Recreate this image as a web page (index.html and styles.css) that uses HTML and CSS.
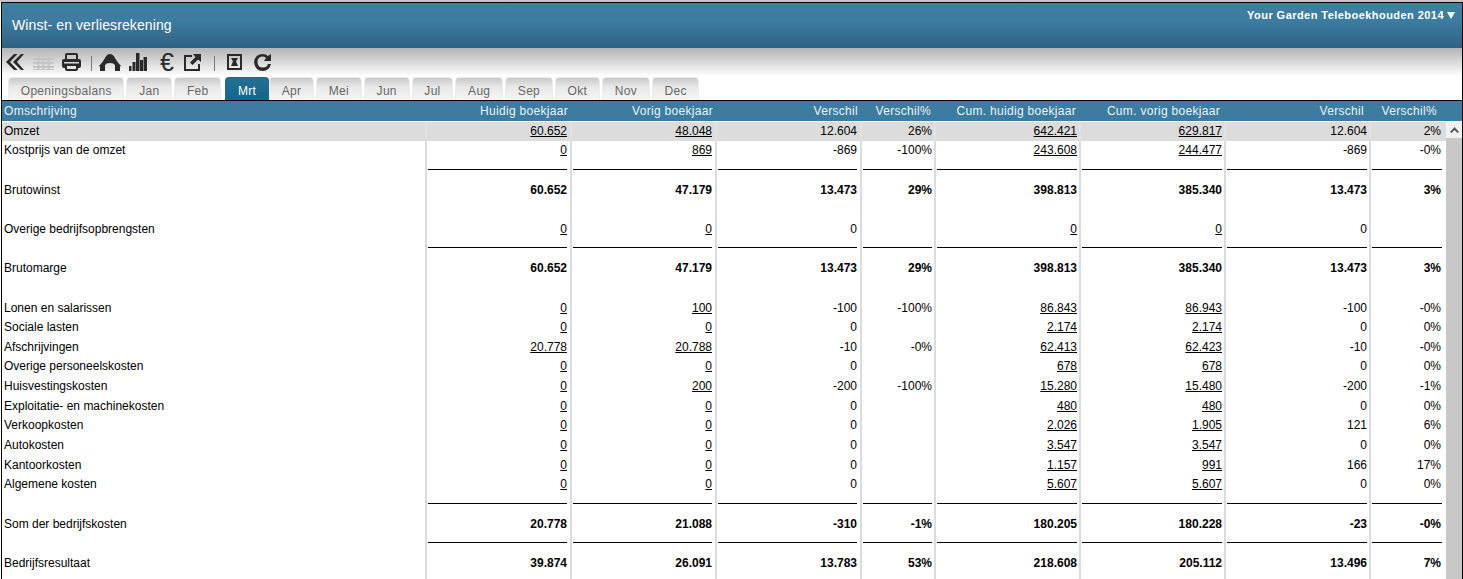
FILE: index.html
```html
<!DOCTYPE html>
<html lang="nl">
<head>
  <meta charset="UTF-8" />
  <title>Winst- en verliesrekening</title>
  <link rel="stylesheet" href="styles.css">
</head>
<body>
  <div class="frame">
    <header class="topbar">
      <h1>Winst- en verliesrekening</h1>
      <div class="company">Your Garden Teleboekhouden 2014 <span class="caret"></span></div>
    </header>

    <div class="toolbar">
      <svg class="ic ic-back" viewBox="0 0 19 18"><path d="M9 1 1 9l8 8h3.500L5 9l7.500-8zM16 1 8 9l8 8h3L12 9l7-8z" /></svg>
      <svg class="ic ic-grid" viewBox="0 0 21 18"><path d="M0 1h21v2H0zM0 5h21v2H0zM0 9h21v2H0zM0 13h21v2H0zM0 16h21v1H0zM4.500 1h2v16h-2zM9.500 1h2v16h-2zM14.500 1h2v16h-2z" /></svg>
      <svg class="ic ic-print" viewBox="0 0 19 18"><path fill-rule="evenodd" d="M5 0h9q2 0 2 2v4h1q2 0 2 2v5q0 2-2 2h-1v1q0 2-2 2H5q-2 0-2-2v-1H2q-2 0-2-2V8q0-2 2-2h1V2q0-2 2-2zm0 2v4h9V2zM2 9v1.500h15V9zM5 13v3h9v-3z" /></svg>
      <span class="tool-sep tool-sep-a"></span>
      <svg class="ic ic-home" viewBox="0 0 22 17"><path d="M0 12Q4 8 6 4 8 0 11 0t5 4q2 4 6 8l-1 .5V17h-5v-5q0-3-5-3t-5 3v5H1v-4.500z" /></svg>
      <svg class="ic ic-bars" viewBox="0 0 18 18"><path d="M0 13h2.500v5H0zM3.500 9h3v9h-3zM7 0h3.500v18H7zM11 7h3v11h-3zM14.500 4H18v14h-3.500z" /></svg>
      <span class="euro">€</span>
      <svg class="ic ic-ext" viewBox="0 0 17 17"><path d="M0 1h8v2H2v12h12V10h2v7H0z" /><path d="M9 0h8v8l-3-2.500L8.500 11 6 8.500 11.500 3z" /></svg>
      <span class="tool-sep tool-sep-b"></span>
      <svg class="ic ic-box" viewBox="0 0 15 16"><path fill-rule="evenodd" d="M0 0h15v16H0zm2 2v12h11V2z" /><path d="M4 4h7L9 7.500l2 4.500H4l2-4.500z" /></svg>
      <svg class="ic ic-refresh" viewBox="0 0 18 18"><path d="M9 1q3 0 5 2l3-2v7h-7l2-3Q11 3.500 9 3.500 3.500 3.500 3.500 9T9 14.500q4 0 5-3.500h3q-2 7-8 7-8 0-9-9 1-8 9-8z" /></svg>
    </div>

    <nav class="tabs">
      <a class="tab">Openingsbalans</a>
      <a class="tab">Jan</a>
      <a class="tab">Feb</a>
      <a class="tab active">Mrt</a>
      <a class="tab">Apr</a>
      <a class="tab">Mei</a>
      <a class="tab">Jun</a>
      <a class="tab">Jul</a>
      <a class="tab">Aug</a>
      <a class="tab">Sep</a>
      <a class="tab">Okt</a>
      <a class="tab">Nov</a>
      <a class="tab">Dec</a>
    </nav>

    <div class="table-head">
      <span class="th-name">Omschrijving</span>
      <span class="th">Huidig boekjaar</span>
      <span class="th">Vorig boekjaar</span>
      <span class="th">Verschil</span>
      <span class="th th-pct">Verschil%</span>
      <span class="th">Cum. huidig boekjaar</span>
      <span class="th th-tight">Cum. vorig boekjaar</span>
      <span class="th th-tight">Verschil</span>
      <span class="th th-pct">Verschil%</span>
    </div>

    <div class="table-wrap">
      <table class="report">
        <tbody>
          <tr class="shaded"><td>Omzet</td><td><a>60.652</a></td><td><a>48.048</a></td><td>12.604</td><td>26%</td><td><a>642.421</a></td><td><a>629.817</a></td><td>12.604</td><td>2%</td></tr>
          <tr><td>Kostprijs van de omzet</td><td><a>0</a></td><td><a>869</a></td><td>-869</td><td>-100%</td><td><a>243.608</a></td><td><a>244.477</a></td><td>-869</td><td>-0%</td></tr>
          <tr class="rule"><td></td><td><i></i></td><td><i></i></td><td><i></i></td><td><i></i></td><td><i></i></td><td><i></i></td><td><i></i></td><td><i></i></td></tr>
          <tr class="total"><td>Brutowinst</td><td>60.652</td><td>47.179</td><td>13.473</td><td>29%</td><td>398.813</td><td>385.340</td><td>13.473</td><td>3%</td></tr>
          <tr><td></td><td></td><td></td><td></td><td></td><td></td><td></td><td></td><td></td></tr>
          <tr><td>Overige bedrijfsopbrengsten</td><td><a>0</a></td><td><a>0</a></td><td>0</td><td></td><td><a>0</a></td><td><a>0</a></td><td>0</td><td></td></tr>
          <tr class="rule"><td></td><td><i></i></td><td><i></i></td><td><i></i></td><td><i></i></td><td><i></i></td><td><i></i></td><td><i></i></td><td><i></i></td></tr>
          <tr class="total"><td>Brutomarge</td><td>60.652</td><td>47.179</td><td>13.473</td><td>29%</td><td>398.813</td><td>385.340</td><td>13.473</td><td>3%</td></tr>
          <tr><td></td><td></td><td></td><td></td><td></td><td></td><td></td><td></td><td></td></tr>
          <tr><td>Lonen en salarissen</td><td><a>0</a></td><td><a>100</a></td><td>-100</td><td>-100%</td><td><a>86.843</a></td><td><a>86.943</a></td><td>-100</td><td>-0%</td></tr>
          <tr><td>Sociale lasten</td><td><a>0</a></td><td><a>0</a></td><td>0</td><td></td><td><a>2.174</a></td><td><a>2.174</a></td><td>0</td><td>0%</td></tr>
          <tr><td>Afschrijvingen</td><td><a>20.778</a></td><td><a>20.788</a></td><td>-10</td><td>-0%</td><td><a>62.413</a></td><td><a>62.423</a></td><td>-10</td><td>-0%</td></tr>
          <tr><td>Overige personeelskosten</td><td><a>0</a></td><td><a>0</a></td><td>0</td><td></td><td><a>678</a></td><td><a>678</a></td><td>0</td><td>0%</td></tr>
          <tr><td>Huisvestingskosten</td><td><a>0</a></td><td><a>200</a></td><td>-200</td><td>-100%</td><td><a>15.280</a></td><td><a>15.480</a></td><td>-200</td><td>-1%</td></tr>
          <tr><td>Exploitatie- en machinekosten</td><td><a>0</a></td><td><a>0</a></td><td>0</td><td></td><td><a>480</a></td><td><a>480</a></td><td>0</td><td>0%</td></tr>
          <tr><td>Verkoopkosten</td><td><a>0</a></td><td><a>0</a></td><td>0</td><td></td><td><a>2.026</a></td><td><a>1.905</a></td><td>121</td><td>6%</td></tr>
          <tr><td>Autokosten</td><td><a>0</a></td><td><a>0</a></td><td>0</td><td></td><td><a>3.547</a></td><td><a>3.547</a></td><td>0</td><td>0%</td></tr>
          <tr><td>Kantoorkosten</td><td><a>0</a></td><td><a>0</a></td><td>0</td><td></td><td><a>1.157</a></td><td><a>991</a></td><td>166</td><td>17%</td></tr>
          <tr><td>Algemene kosten</td><td><a>0</a></td><td><a>0</a></td><td>0</td><td></td><td><a>5.607</a></td><td><a>5.607</a></td><td>0</td><td>0%</td></tr>
          <tr class="rule"><td></td><td><i></i></td><td><i></i></td><td><i></i></td><td><i></i></td><td><i></i></td><td><i></i></td><td><i></i></td><td><i></i></td></tr>
          <tr class="total"><td>Som der bedrijfskosten</td><td>20.778</td><td>21.088</td><td>-310</td><td>-1%</td><td>180.205</td><td>180.228</td><td>-23</td><td>-0%</td></tr>
          <tr class="rule"><td></td><td><i></i></td><td><i></i></td><td><i></i></td><td><i></i></td><td><i></i></td><td><i></i></td><td><i></i></td><td><i></i></td></tr>
          <tr class="total"><td>Bedrijfsresultaat</td><td>39.874</td><td>26.091</td><td>13.783</td><td>53%</td><td>218.608</td><td>205.112</td><td>13.496</td><td>7%</td></tr>
          <tr><td></td><td></td><td></td><td></td><td></td><td></td><td></td><td></td><td></td></tr>
        </tbody>
      </table>
      <div class="scrollbar">
        <div class="scroll-up"><svg viewBox="0 0 9 6"><path d="M0 5 4.500 0 9 5 7.500 6 4.500 3 1.500 6z" /></svg></div>
        <div class="scroll-thumb"></div>
      </div>
    </div>
  </div>
</body>
</html>
```

FILE: styles.css
```css
html, body {
  margin: 0;
  height: 579px;
  overflow: hidden;
  background: #fff;
}

body {
  padding-top: 2px;
  box-sizing: border-box;
  background: linear-gradient(#c4c4c4, #c4c4c4) top / 100% 2px no-repeat #fff;
  font-family: "Liberation Sans", Arial, sans-serif;
  font-size: 12px;
  color: #000;
}

.frame {
  margin-left: 1px;
  width: 1462px;
  height: 577px;
  box-sizing: border-box;
  border: 1px solid #000;
  border-bottom: 0;
  display: flex;
  flex-direction: column;
  overflow: hidden;
}

/* top bar */
.topbar {
  height: 45px;
  flex: none;
  box-sizing: border-box;
  display: flex;
  justify-content: space-between;
  background: linear-gradient(#3f7fa4, #3d7b9f 40%, #2d6383);
  color: #fff;
}

.topbar h1 {
  margin: 14px 0 0 10px;
  font-size: 14px;
  font-weight: normal;
  line-height: 17px;
  letter-spacing: 0.1px;
}

.company {
  margin: 5px 7px 0 0;
  align-self: flex-start;
  font-size: 11px;
  font-weight: bold;
  line-height: 14px;
  letter-spacing: 0.45px;
  display: flex;
  align-items: center;
  gap: 3px;
}

.caret {
  width: 0;
  height: 0;
  border-left: 4px solid transparent;
  border-right: 4px solid transparent;
  border-top: 7px solid #fff;
}

/* toolbar */
.toolbar {
  height: 28px;
  flex: none;
  display: flex;
  align-items: center;
  padding-left: 3px;
  box-sizing: border-box;
  background: linear-gradient(#b4b4b4, #f2f2f2 85%, #fff);
}

.ic {
  display: block;
  height: 18px;
  fill: #2a2a2a;
  flex: none;
}

.ic-back { width: 19px; }
.ic-grid { width: 21px; margin-left: 9px; fill: #c4c4c4; }
.ic-print { width: 19px; margin-left: 8px; }
.ic-home { width: 22px; margin-left: 8px; height: 17px; }
.ic-bars { width: 18px; margin-left: 8px; }
.ic-ext { width: 17px; margin-left: 8px; height: 17px; }
.ic-box { width: 15px; margin-left: 12px; height: 16px; }
.ic-refresh { width: 18px; margin-left: 12px; }

.tool-sep {
  width: 1px;
  height: 15px;
  margin-top: 3px;
  background: #777;
  flex: none;
}

.tool-sep-a { margin-left: 10px; margin-right: -1px; }
.tool-sep-b { margin-left: 13px; }

.euro {
  width: 16px;
  margin-left: 13px;
  font-size: 25px;
  line-height: 20px;
  color: #2a2a2a;
  flex: none;
}

/* month tabs */
.tabs {
  height: 25px;
  flex: none;
  display: flex;
  align-items: flex-end;
  gap: 2px;
  padding-left: 6px;
  box-sizing: border-box;
  border-bottom: 1px solid #000;
}

.tab {
  height: 23px;
  padding: 3px 11.75px 0;
  box-sizing: border-box;
  display: flex;
  align-items: center;
  border: 1px solid #ececec;
  border-bottom: 0;
  border-radius: 4px 4px 0 0;
  background: linear-gradient(#c8c8c8, #e8e8e8 40%, #f6f6f6);
  color: #666;
  letter-spacing: 0.3px;
}

.tab.active {
  margin: 0 -2px 0 2px;
  border-color: #1f6b8e;
  background: linear-gradient(#256f92, #11678a);
  color: #fff;
}

/* table */
.table-head {
  height: 20px;
  flex: none;
  display: flex;
  align-items: center;
  box-sizing: border-box;
  background: #3c7ca1;
  color: #eaf2f6;
  letter-spacing: 0.3px;
  line-height: 14px;
}

.th-name {
  width: 424px;
  padding-left: 2px;
  box-sizing: border-box;
}

.th {
  width: 145px;
  padding-right: 3px;
  box-sizing: border-box;
  text-align: right;
}

.th-tight { width: 144px; }
.th-pct { width: 73px; }

.table-wrap {
  flex: 1;
  min-height: 0;
  display: flex;
  overflow: hidden;
}

.report {
  display: block;
  width: 1444px;
  flex: none;
  font-size: 12px;
}

.report tbody {
  display: block;
  padding-top: 0.6px;
}

.report tr {
  display: grid;
  grid-template-columns: 425px 145px 145px 145px 74px 145px 145px 145px 75px;
  height: 19.67px;
}

.report td {
  padding: 0 3px 0 0;
  box-sizing: border-box;
  text-align: right;
  line-height: 19.67px;
  border-right: 2px solid #dcdcdc;
  white-space: nowrap;
}

.report td:first-child {
  padding-left: 2px;
  text-align: left;
}

.report td:nth-child(n+5) {
  padding-right: 2px;
}

.report td:last-child {
  padding-right: 5px;
  border-right: 0;
}

.report a {
  text-decoration: underline;
}

.shaded td {
  background: #dcdcdc;
  border-right-color: #e2e2e2;
}

.total td {
  font-weight: bold;
}

.total td:first-child {
  font-weight: normal;
}

.rule i {
  display: block;
  height: 1px;
  margin: 7.900px 0 0 1px;
  background: #000;
}

.rule td:last-child i {
  margin-right: -1px;
}

.scrollbar {
  width: 16px;
  flex: none;
  display: flex;
  flex-direction: column;
}

.scroll-up {
  height: 17px;
  flex: none;
  background: #f1f1f1;
  display: flex;
  align-items: center;
  justify-content: center;
}

.scroll-up svg {
  width: 9px;
  height: 6px;
  fill: #555;
}

.scroll-thumb {
  flex: 1;
  background: #c8c8c8;
}
```
